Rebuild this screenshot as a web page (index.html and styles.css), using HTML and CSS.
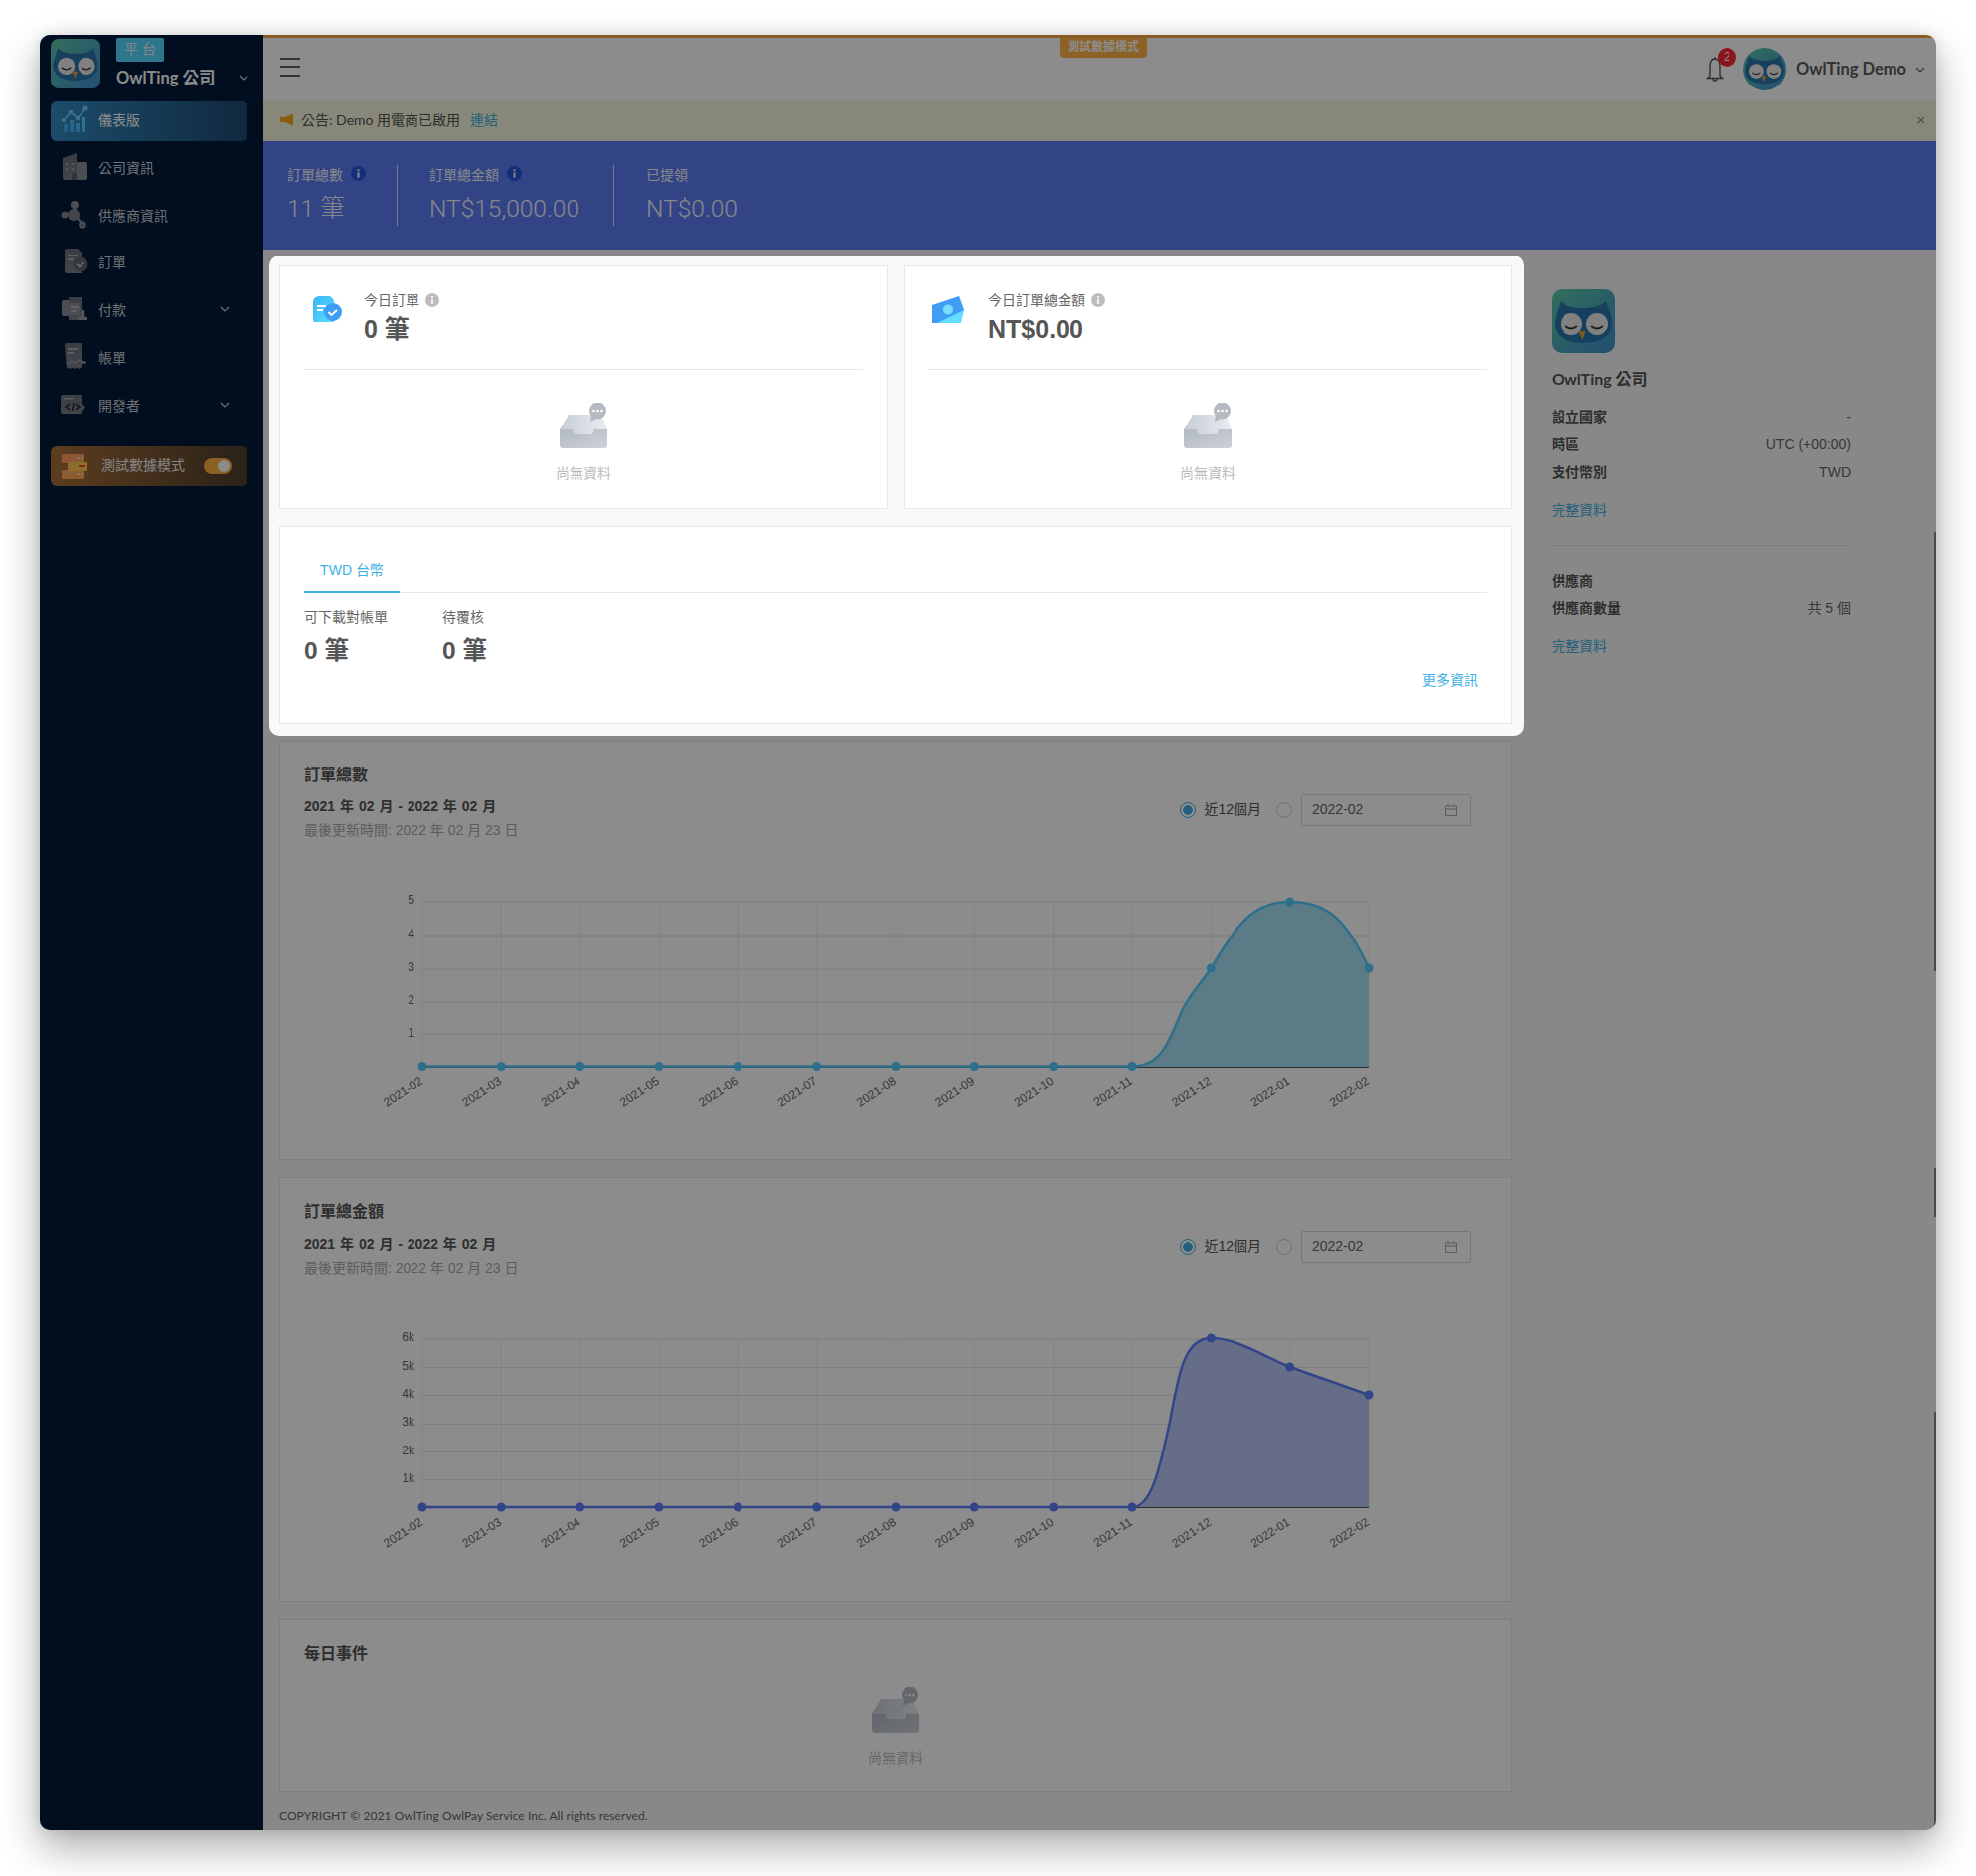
FILE: index.html
```html
<!DOCTYPE html>
<html lang="zh-Hant">
<head>
<meta charset="utf-8">
<title>OwlTing 儀表版</title>
<link rel="stylesheet" href="styles.css">
</head>
<body>
<svg class="sprite" width="0" height="0" aria-hidden="true">
  <defs>
    <linearGradient id="gOwl" x1="0" y1="0" x2="1" y2="1"><stop offset="0" stop-color="#5cc9a8"/><stop offset="1" stop-color="#3e8fd0"/></linearGradient>
    <linearGradient id="gDoc" x1="0" y1="0" x2="1" y2="1"><stop offset="0" stop-color="#35b6f4"/><stop offset="1" stop-color="#62dcff"/></linearGradient>
    <linearGradient id="gBars" x1="0" y1="1" x2="1" y2="0"><stop offset="0" stop-color="#3fa0ff"/><stop offset="1" stop-color="#5ce0ff"/></linearGradient>
    <linearGradient id="gGrey" x1="0" y1="0" x2="0" y2="1"><stop offset="0" stop-color="#6b7078"/><stop offset="1" stop-color="#7a7f87"/></linearGradient>
    <linearGradient id="gTray" x1="0" y1="0" x2="1" y2="0"><stop offset="0" stop-color="#c5ccd4"/><stop offset="1" stop-color="#e9edf2"/></linearGradient>
    <linearGradient id="gFront" x1="0" y1="0" x2="1" y2="1"><stop offset="0" stop-color="#b3b9c1"/><stop offset="1" stop-color="#ccd1d8"/></linearGradient>
    <symbol id="owl" viewBox="0 0 64 64">
      <rect width="64" height="64" rx="10" fill="url(#gOwl)"/>
      <path d="M9 12C14 17 22 19 32 19C42 19 50 17 55 12C59 22 61 29 61 35C61 48 47 54 32 54C17 54 3 48 3 35C3 29 6 22 9 12Z" fill="#2b76ad"/>
      <circle cx="20" cy="35" r="11" fill="#ececec"/>
      <circle cx="46" cy="35" r="11" fill="#ececec"/>
      <path d="M14 37q6 5 12 0M40 37q6 5 12 0" fill="none" stroke="#33383f" stroke-width="1.800"/>
      <path d="M27.500 42h7l-3 9z" fill="#eba130"/>
    </symbol>
    <symbol id="info" viewBox="0 0 14 14"><circle cx="7" cy="7" r="7" fill="currentColor"/><path class="info-mark" d="M6 6h2v5H6zM6 3h2v2H6z"/></symbol>
    <symbol id="chev" viewBox="0 0 10 6"><path d="M1 1l4 4 4-4" fill="none" stroke="currentColor" stroke-width="1.200"/></symbol>
    <symbol id="i-dash" viewBox="0 0 28 28">
      <path d="M3 27V19h4v8zM9 27V15h4v12zM15 27V18h4v9zM21 27V12h4v15z" fill="url(#gBars)"/>
      <path d="M3 15L10 7l7 6L25 3" fill="none" stroke="#6ad0ff" stroke-width="1.800"/>
      <circle cx="3" cy="15" r="2.200" fill="#6ad0ff"/><circle cx="10" cy="7" r="2.200" fill="#6ad0ff"/><circle cx="17" cy="13" r="2.200" fill="#6ad0ff"/><circle cx="25" cy="3" r="2.600" fill="#6ad0ff"/>
    </symbol>
    <symbol id="i-corp" viewBox="0 0 28 28">
      <path d="M2 5L16 0V27H4a2 2 0 0 1-2-2z" fill="url(#gGrey)"/><path d="M16 9h9a2 2 0 0 1 2 2V25a2 2 0 0 1-2 2H16z" fill="#888d95"/><path d="M11 20h5v7h-5z" fill="#5a5f66"/>
      <path d="M5 10h2v2H5zM11 10h2v2h-2zM5 15h2v2H5zM11 15h2v2h-2z" fill="#9aa0a8"/>
    </symbol>
    <symbol id="i-net" viewBox="0 0 28 28">
      <path d="M14 4V13M14 13L4 14M14 13L22 24" stroke="#80858d" stroke-width="2.500" fill="none"/>
      <circle cx="14" cy="4" r="4" fill="#8a8f97"/><circle cx="4" cy="14" r="3.500" fill="#80858d"/><circle cx="13" cy="14" r="6" fill="#7a7f87"/><circle cx="22" cy="24" r="3.800" fill="#8a8f97"/><circle cx="22" cy="24" r="1.600" fill="#5a5f66"/>
    </symbol>
    <symbol id="i-order" viewBox="0 0 28 28">
      <path d="M6 1H17L21 5V26H6a2 2 0 0 1-2-2V3a2 2 0 0 1 2-2z" fill="url(#gGrey)"/><path d="M7 7h10v2H7zM7 11h6v2H7z" fill="#a5aab2"/>
      <circle cx="20" cy="17" r="7.500" fill="#5f646c"/><path d="M16.500 17l2.500 2.500 4.500-4.500" fill="none" stroke="#d4d6da" stroke-width="1.500"/>
    </symbol>
    <symbol id="i-pay" viewBox="0 0 28 28">
      <path d="M3 5H12V21H3a2 2 0 0 1-2-2V7a2 2 0 0 1 2-2z" fill="#8a8f97"/><path d="M8 2H22V25H8z" fill="url(#gGrey)"/><path d="M8 8H19V20H8z" fill="#8a8f97"/><path d="M10 11h8v2h-8zM10 15h5v2h-5z" fill="#b0b4ba"/>
      <path d="M21 15h3l.5 7H27v3H17v-3h3.500z" fill="#9a9fa7"/>
    </symbol>
    <symbol id="i-bill" viewBox="0 0 28 28">
      <path d="M4 2a2 2 0 0 1 2-2H20a2 2 0 0 1 2 2V18h3v3h-3v5l-2-1.500-2 1.500-2-1.500-2 1.500-2-1.500-2 1.500-2-1.500-2 1.500z" fill="url(#gGrey)"/><path d="M7 5h10v2H7zM7 9h6v2H7z" fill="#a5aab2"/><path d="M6 21l5-3 3 2 5-3 7 3" fill="none" stroke="#9aa0a8" stroke-width="1.200"/>
    </symbol>
    <symbol id="i-dev" viewBox="0 0 28 28">
      <rect y="4" width="22" height="19" rx="2" fill="url(#gGrey)"/><path d="M3 7h9v1.500H3z" fill="#a5aab2"/>
      <path d="M9 13l-4 3 4 3M13 12l-1.500 8M15 13l4 3-4 3" fill="none" stroke="#2d3036" stroke-width="1.700"/><path d="M22 13l3 3.500-3 3.500z" fill="#80858d"/>
    </symbol>
    <symbol id="i-srv" viewBox="0 0 28 28">
      <rect x="1" y="2" width="23" height="9" rx="1" fill="#ffa060"/><rect x="1" y="18" width="23" height="9" rx="1" fill="#ffa858"/><rect x="7" y="10" width="20" height="9" rx="1" fill="#ffc84e"/>
      <path d="M16 5h3v2h-3zM20 5h3v2h-3zM16 21h3v2h-3zM20 21h3v2h-3z" fill="#f5d6b0"/><path d="M18 13h3v2h-3zM22 13h3v2h-3z" fill="#e5572c"/>
    </symbol>
    <symbol id="i-today" viewBox="0 0 29 26">
      <path d="M6 0H17L21 4V26H2a2 2 0 0 1-2-2V6a6 6 0 0 1 6-6z" fill="url(#gDoc)"/><path d="M4 9h9v2H4zM4 13h6v2H4z" fill="#fff"/>
      <circle cx="20" cy="16" r="9" fill="#3f9ef4"/><path d="M15.500 16l3 3 5.500-5" fill="none" stroke="#fff" stroke-width="1.800"/>
    </symbol>
    <symbol id="i-money" viewBox="0 0 32 27">
      <path d="M27 0L32 14L29 27H5Z" fill="#62dcff"/><path d="M0 9L27 0L32 14L5 27H0Z" fill="#3f9ef4"/><circle cx="16" cy="13.500" r="5" fill="#7adfff"/>
    </symbol>
    <symbol id="i-empty" viewBox="0 0 48 46">
      <path d="M0 27L9 12H42L48 27V34H0Z" fill="url(#gTray)"/>
      <path d="M0 27H13L15 32H33L35 27H48V43a3 3 0 0 1-3 3H3a3 3 0 0 1-3-3Z" fill="url(#gFront)"/>
      <circle cx="38.500" cy="8" r="8.500" fill="#b5bac1"/><path d="M32 12l-1 7 6-3z" fill="#b5bac1"/>
      <circle cx="34.500" cy="8" r="1.300" fill="#fff"/><circle cx="38.500" cy="8" r="1.300" fill="#fff"/><circle cx="42.500" cy="8" r="1.300" fill="#fff"/>
    </symbol>
  </defs>
</svg>

<div class="window">
  <aside class="sidebar">
    <div class="brand">
      <svg class="brand-logo"><use href="#owl"/></svg>
      <div class="brand-text">
        <span class="brand-tag">平 台</span>
        <span class="brand-name">OwlTing 公司</span>
      </div>
      <svg class="chev brand-chev"><use href="#chev"/></svg>
    </div>
    <nav class="menu">
      <a class="menu-item is-active"><svg class="menu-icon"><use href="#i-dash"/></svg><span>儀表版</span></a>
      <a class="menu-item"><svg class="menu-icon"><use href="#i-corp"/></svg><span>公司資訊</span></a>
      <a class="menu-item"><svg class="menu-icon"><use href="#i-net"/></svg><span>供應商資訊</span></a>
      <a class="menu-item"><svg class="menu-icon"><use href="#i-order"/></svg><span>訂單</span></a>
      <a class="menu-item"><svg class="menu-icon"><use href="#i-pay"/></svg><span>付款</span><svg class="chev menu-chev"><use href="#chev"/></svg></a>
      <a class="menu-item"><svg class="menu-icon"><use href="#i-bill"/></svg><span>帳單</span></a>
      <a class="menu-item"><svg class="menu-icon"><use href="#i-dev"/></svg><span>開發者</span><svg class="chev menu-chev"><use href="#chev"/></svg></a>
    </nav>
    <div class="testmode">
      <svg class="menu-icon"><use href="#i-srv"/></svg>
      <span class="testmode-label">測試數據模式</span>
      <span class="toggle"></span>
    </div>
  </aside>

  <div class="main">
    <header class="topbar">
      <div class="burger"><i></i><i></i><i></i></div>
      <span class="mode-flag">測試數據模式</span>
      <div class="account">
        <span class="bell">
          <svg viewBox="0 0 20 26" class="bell-icon"><path d="M10 2C6 2 5 6 5 10V19L2.500 21.500H17.500L15 19V10C15 6 14 2 10 2ZM8 22a2 2 0 0 0 4 0M10 2V0" fill="none" stroke="#555" stroke-width="1.400"/></svg>
          <b class="bell-badge">2</b>
        </span>
        <svg class="avatar"><use href="#owl"/></svg>
        <span class="account-name">OwlTing Demo</span>
        <svg class="chev account-chev"><use href="#chev"/></svg>
      </div>
    </header>

    <div class="notice">
      <svg class="notice-icon" viewBox="0 0 14 12"><path d="M0 3.500H5L13 0V12L5 8.500H0Z" fill="#f7a718"/></svg>
      <span>公告: Demo 用電商已啟用</span>
      <a class="notice-link">連結</a>
      <span class="notice-close">×</span>
    </div>

    <section class="band">
      <div class="band-stat">
        <div class="band-label">訂單總數 <svg class="info info-blue"><use href="#info"/></svg></div>
        <div class="band-value">11 筆</div>
      </div>
      <div class="band-stat band-stat-wide">
        <div class="band-label">訂單總金額 <svg class="info info-blue"><use href="#info"/></svg></div>
        <div class="band-value">NT$15,000.00</div>
      </div>
      <div class="band-stat band-stat-last">
        <div class="band-label">已提領</div>
        <div class="band-value">NT$0.00</div>
      </div>
    </section>

    <div class="content">
      <div class="col-main">
        <div class="spotlight">
          <div class="today-row">
            <article class="card today">
              <div class="today-head">
                <svg class="today-icon"><use href="#i-today"/></svg>
                <div>
                  <div class="today-title">今日訂單 <svg class="info"><use href="#info"/></svg></div>
                  <div class="today-value">0 筆</div>
                </div>
              </div>
              <div class="empty empty-today"><svg class="empty-icon"><use href="#i-empty"/></svg><span>尚無資料</span></div>
            </article>
            <article class="card today">
              <div class="today-head">
                <svg class="today-icon today-icon-money"><use href="#i-money"/></svg>
                <div>
                  <div class="today-title">今日訂單總金額 <svg class="info"><use href="#info"/></svg></div>
                  <div class="today-value">NT$0.00</div>
                </div>
              </div>
              <div class="empty empty-today"><svg class="empty-icon"><use href="#i-empty"/></svg><span>尚無資料</span></div>
            </article>
          </div>
          <article class="card bills">
            <div class="tabs"><span class="tab">TWD 台幣</span></div>
            <div class="bill-stats">
              <div class="bill-stat"><div class="bill-label">可下載對帳單</div><div class="bill-value">0 筆</div></div>
              <div class="bill-stat"><div class="bill-label">待覆核</div><div class="bill-value">0 筆</div></div>
            </div>
            <a class="more">更多資訊</a>
          </article>
        </div>

        <article class="card chart-card chart-card-a">
          <h3 class="card-title">訂單總數</h3>
          <div class="chart-head">
            <div>
              <div class="range">2021 年 02 月 - 2022 年 02 月</div>
              <div class="updated">最後更新時間: 2022 年 02 月 23 日</div>
            </div>
            <div class="controls">
              <span class="radio is-on"></span><span class="radio-label">近12個月</span>
              <span class="radio"></span>
              <span class="date-input">2022-02<svg class="cal" viewBox="0 0 12 12"><path d="M.5 2H11.500V11.500H.5ZM.5 5H11.500M3 0V2M9 0V2" fill="none" stroke="#aaa"/></svg></span>
            </div>
          </div>
          <svg class="chart" viewBox="282 860 1238 300">
            <path class="grid-v" d="M425 907V1073M504.300 907V1073M583.700 907V1073M663 907V1073M742.300 907V1073M821.700 907V1073M901 907V1073M980.300 907V1073M1059.700 907V1073M1139 907V1073M1218.300 907V1073M1297.700 907V1073M1377 907V1073"/>
            <path class="grid-h" d="M425 907H1377M425 941H1377M425 975H1377M425 1008H1377M425 1040H1377"/>
            <path class="fill-a" d="M1139 1073C1172 1073 1178 1040 1190 1015C1200 996 1208 990 1218.300 974C1245 930 1260 907 1297.700 907C1335 907 1355 925 1377 974V1073Z"/>
            <path class="axis" d="M425 1073.500H1377"/>
            <path class="line line-a" d="M425 1072.500H1139C1172 1072.500 1178 1040 1190 1015C1200 996 1208 990 1218.300 974C1245 930 1260 907 1297.700 907C1335 907 1355 925 1377 974"/>
            <g class="dots-a">
              <circle cx="425" cy="1072.500" r="4.500"/><circle cx="504.300" cy="1072.500" r="4.500"/><circle cx="583.700" cy="1072.500" r="4.500"/><circle cx="663" cy="1072.500" r="4.500"/><circle cx="742.300" cy="1072.500" r="4.500"/><circle cx="821.700" cy="1072.500" r="4.500"/><circle cx="901" cy="1072.500" r="4.500"/><circle cx="980.300" cy="1072.500" r="4.500"/><circle cx="1059.700" cy="1072.500" r="4.500"/><circle cx="1139" cy="1072.500" r="4.500"/><circle cx="1218.300" cy="974" r="4.500"/><circle cx="1297.700" cy="907" r="4.500"/><circle cx="1377" cy="974" r="4.500"/>
            </g>
            <g class="ylabels">
              <text x="417" y="909">5</text><text x="417" y="943">4</text><text x="417" y="977">3</text><text x="417" y="1010">2</text><text x="417" y="1043">1</text>
            </g>
            <g class="xlabels">
              <text transform="translate(427 1091) rotate(-33)">2021-02</text><text transform="translate(506.300 1091) rotate(-33)">2021-03</text><text transform="translate(585.700 1091) rotate(-33)">2021-04</text><text transform="translate(665 1091) rotate(-33)">2021-05</text><text transform="translate(744.300 1091) rotate(-33)">2021-06</text><text transform="translate(823.700 1091) rotate(-33)">2021-07</text><text transform="translate(903 1091) rotate(-33)">2021-08</text><text transform="translate(982.300 1091) rotate(-33)">2021-09</text><text transform="translate(1061.700 1091) rotate(-33)">2021-10</text><text transform="translate(1141 1091) rotate(-33)">2021-11</text><text transform="translate(1220.300 1091) rotate(-33)">2021-12</text><text transform="translate(1299.700 1091) rotate(-33)">2022-01</text><text transform="translate(1379 1091) rotate(-33)">2022-02</text>
            </g>
          </svg>
        </article>

        <article class="card chart-card chart-card-b">
          <h3 class="card-title">訂單總金額</h3>
          <div class="chart-head">
            <div>
              <div class="range">2021 年 02 月 - 2022 年 02 月</div>
              <div class="updated">最後更新時間: 2022 年 02 月 23 日</div>
            </div>
            <div class="controls">
              <span class="radio is-on"></span><span class="radio-label">近12個月</span>
              <span class="radio"></span>
              <span class="date-input">2022-02<svg class="cal" viewBox="0 0 12 12"><path d="M.5 2H11.500V11.500H.5ZM.5 5H11.500M3 0V2M9 0V2" fill="none" stroke="#aaa"/></svg></span>
            </div>
          </div>
          <svg class="chart" viewBox="282 1299 1238 300">
            <path class="grid-v" d="M425 1347V1517M504.300 1347V1517M583.700 1347V1517M663 1347V1517M742.300 1347V1517M821.700 1347V1517M901 1347V1517M980.300 1347V1517M1059.700 1347V1517M1139 1347V1517M1218.300 1347V1517M1297.700 1347V1517M1377 1347V1517"/>
            <path class="grid-h" d="M425 1347H1377M425 1375.500H1377M425 1403.500H1377M425 1432.500H1377M425 1460.500H1377M425 1488.500H1377"/>
            <path class="fill-b" d="M1139 1516C1160 1516 1168 1470 1177 1430C1186 1380 1192 1346 1218.300 1346C1245 1346 1270 1364 1297.700 1375L1377 1403V1516Z"/>
            <path class="axis" d="M425 1516.500H1377"/>
            <path class="line line-b" d="M425 1516H1139C1160 1516 1168 1470 1177 1430C1186 1380 1192 1346 1218.300 1346C1245 1346 1270 1364 1297.700 1375L1377 1403"/>
            <g class="dots-b">
              <circle cx="425" cy="1516" r="4.500"/><circle cx="504.300" cy="1516" r="4.500"/><circle cx="583.700" cy="1516" r="4.500"/><circle cx="663" cy="1516" r="4.500"/><circle cx="742.300" cy="1516" r="4.500"/><circle cx="821.700" cy="1516" r="4.500"/><circle cx="901" cy="1516" r="4.500"/><circle cx="980.300" cy="1516" r="4.500"/><circle cx="1059.700" cy="1516" r="4.500"/><circle cx="1139" cy="1516" r="4.500"/><circle cx="1218.300" cy="1346" r="4.500"/><circle cx="1297.700" cy="1375" r="4.500"/><circle cx="1377" cy="1403" r="4.500"/>
            </g>
            <g class="ylabels">
              <text x="417" y="1349">6k</text><text x="417" y="1378">5k</text><text x="417" y="1406">4k</text><text x="417" y="1434">3k</text><text x="417" y="1463">2k</text><text x="417" y="1491">1k</text>
            </g>
            <g class="xlabels">
              <text transform="translate(427 1535) rotate(-33)">2021-02</text><text transform="translate(506.300 1535) rotate(-33)">2021-03</text><text transform="translate(585.700 1535) rotate(-33)">2021-04</text><text transform="translate(665 1535) rotate(-33)">2021-05</text><text transform="translate(744.300 1535) rotate(-33)">2021-06</text><text transform="translate(823.700 1535) rotate(-33)">2021-07</text><text transform="translate(903 1535) rotate(-33)">2021-08</text><text transform="translate(982.300 1535) rotate(-33)">2021-09</text><text transform="translate(1061.700 1535) rotate(-33)">2021-10</text><text transform="translate(1141 1535) rotate(-33)">2021-11</text><text transform="translate(1220.300 1535) rotate(-33)">2021-12</text><text transform="translate(1299.700 1535) rotate(-33)">2022-01</text><text transform="translate(1379 1535) rotate(-33)">2022-02</text>
            </g>
          </svg>
        </article>

        <article class="card events">
          <h3 class="card-title">每日事件</h3>
          <div class="empty empty-events"><svg class="empty-icon"><use href="#i-empty"/></svg><span>尚無資料</span></div>
        </article>

        <footer class="copyright">COPYRIGHT © 2021 OwlTing OwlPay Service Inc. All rights reserved.</footer>
      </div>

      <aside class="col-side">
        <svg class="side-logo"><use href="#owl"/></svg>
        <div class="side-title">OwlTing 公司</div>
        <dl class="side-list">
          <div class="side-row"><dt>設立國家</dt><dd>-</dd></div>
          <div class="side-row"><dt>時區</dt><dd>UTC (+00:00)</dd></div>
          <div class="side-row"><dt>支付幣別</dt><dd>TWD</dd></div>
        </dl>
        <a class="side-link">完整資料</a>
        <hr class="side-rule">
        <dl class="side-list side-list-b">
          <div class="side-row"><dt>供應商</dt><dd></dd></div>
          <div class="side-row"><dt>供應商數量</dt><dd>共 5 個</dd></div>
        </dl>
        <a class="side-link">完整資料</a>
      </aside>
    </div>
  </div>

  <span class="thumb thumb-a"></span>
  <span class="thumb thumb-b"></span>
  <span class="thumb thumb-c"></span>
</div>
</body>
</html>
```

FILE: styles.css
```css
* { box-sizing: border-box; }

html, body { margin: 0; background: #fff; }

body {
  padding: 35px 40px 46px;
  font-family: "Liberation Sans", "Noto Sans CJK TC", sans-serif;
  font-size: 14px;
  color: #666;
}

.sprite { position: absolute; }

.window {
  position: relative;
  display: flex;
  width: 1908px;
  height: 1806px;
  border-radius: 10px;
  overflow: hidden;
  box-shadow: 0 18px 40px rgba(0, 0, 0, .32), 0 0 14px rgba(0, 0, 0, .12);
}

/* sidebar */
.sidebar {
  flex: none;
  width: 225px;
  padding: 3px 16px 0 11px;
  background: #021b3a;
  color: #c9ccd2;
}

.brand { display: flex; align-items: flex-start; }
.brand-logo { flex: none; width: 50px; height: 50px; margin-top: 1px; }
.brand-text { display: flex; flex-direction: column; align-items: flex-start; margin-left: 16px; }
.brand-tag {
  width: 48px;
  height: 24px;
  border-radius: 2px;
  background: #52d8ff;
  color: #f2f2f2;
  font-size: 14px;
  line-height: 22px;
  text-align: center;
}
.brand-name {
  margin-top: 4px;
  color: #fff;
  font-family: "Lato", "Noto Sans CJK TC", sans-serif;
  font-size: 16.5px;
  font-weight: 700;
  line-height: 24px;
  white-space: nowrap;
}
.chev { width: 10px; height: 6px; color: #c9ccd2; }
.brand-chev { margin: 37px -1px 0 auto; }

.menu { margin-top: 12px; }
.menu-item {
  display: flex;
  align-items: center;
  height: 40px;
  margin-bottom: 7.8px;
  padding: 0 0 4px 10px;
  border-radius: 6px;
  font-size: 14px;
}
.menu-item.is-active {
  background: linear-gradient(90deg, #338cc3, #1d4b73);
  color: #fff;
}
.menu-icon { flex: none; width: 28px; height: 28px; margin-right: 10px; }
.menu-chev { margin-left: auto; margin-right: 18px; }

.testmode {
  display: flex;
  align-items: center;
  height: 40px;
  margin-top: 20px;
  padding-left: 10px;
  border-radius: 6px;
  background: linear-gradient(90deg, #a87038, #4d3d2d);
}
.testmode .menu-icon { margin-right: 13px; }
.testmode-label { margin-bottom: 3px; color: #f0f0f0; }
.toggle {
  position: relative;
  width: 28px;
  height: 16px;
  margin-left: auto;
  margin-right: 16px;
  border-radius: 8px;
  background: #ffb03f;
}
.toggle::after {
  content: "";
  position: absolute;
  top: 2px;
  right: 2px;
  width: 12px;
  height: 12px;
  border-radius: 50%;
  background: #fff;
}

/* main */
.main {
  display: flex;
  flex: 1;
  flex-direction: column;
  min-width: 0;
  border-top: 3px solid #fba73e;
  background: #f8f8f8;
}

.topbar {
  position: relative;
  display: flex;
  flex: none;
  align-items: center;
  height: 63px;
  padding: 0 11px 0 17px;
  background: #fff;
}
.burger { display: flex; flex-direction: column; gap: 6.5px; width: 20px; margin-bottom: 5px; }
.burger i { display: block; height: 2px; background: #5c5c5c; }
.mode-flag {
  position: absolute;
  top: 0;
  left: 801px;
  width: 88px;
  height: 20px;
  border-radius: 0 0 4px 4px;
  background: #ffb245;
  color: #fff;
  font-size: 12px;
  font-weight: 700;
  line-height: 18px;
  text-align: center;
  white-space: nowrap;
}
.account { display: flex; align-items: center; margin-left: auto; }
.bell { position: relative; display: block; width: 20px; height: 26px; margin-right: 19px; }
.bell-icon { display: block; width: 20px; height: 26px; }
.bell-badge {
  position: absolute;
  top: -9px;
  left: 13px;
  width: 19px;
  height: 19px;
  border-radius: 50%;
  background: #ff2630;
  color: #fff;
  font-size: 12px;
  font-weight: 400;
  line-height: 19px;
  text-align: center;
}
.avatar { width: 43px; height: 43px; border-radius: 50%; }
.account-name {
  margin-left: 10px;
  padding-bottom: 2px;
  color: #5a5a5a;
  font-family: "Lato", sans-serif;
  font-size: 16.5px;
  font-weight: 700;
}
.account-chev { margin-left: 9px; color: #666; }

.notice {
  display: flex;
  flex: none;
  align-items: center;
  height: 41px;
  padding: 0 0 3px 17px;
  background: #f8f8de;
  color: #555;
  font-family: "Lato", "Noto Sans CJK TC", sans-serif;
  font-size: 14px;
}
.notice-icon { width: 14px; height: 13px; margin-right: 7px; }
.notice-link { margin-left: 10px; color: #3fb1e5; }
.notice-close { margin-left: auto; margin-right: 11px; color: #888; font-family: "Liberation Sans", sans-serif; font-size: 15px; }

.band {
  display: flex;
  flex: none;
  align-items: flex-start;
  height: 109px;
  padding: 24px 0 0 24px;
  background: #5b7df5;
  color: #f4f6fc;
}
.band-stat { padding-right: 31px; margin-right: 32px; border-right: 1px solid #dfe5fb; }
.band-stat-wide { padding-right: 34px; }
.band-stat-last { border-right: 0; }
.band-label { display: flex; align-items: center; gap: 6px; height: 19px; padding-bottom: 2px; font-size: 14px; }
.band-value { height: 42px; font-family: "Roboto", "Noto Sans CJK TC", sans-serif; font-size: 24.5px; font-weight: 300; line-height: 49px; white-space: nowrap; }

.info { width: 14px; height: 14px; margin-left: 2px; color: #bdbdbd; vertical-align: -2px; }
.info-mark { fill: #f2f2f2; }
.info-blue { width: 15px; height: 15px; color: #2456e0; }
.info-blue .info-mark { fill: #6f8df0; }

.content {
  display: grid;
  flex: 1;
  grid-template-columns: 1240px 301px;
  column-gap: 40px;
  align-items: start;
  padding: 16px 16px 0;
}

.card { border: 1px solid #e8e8e8; background: #fff; }
.col-main { display: flex; flex-direction: column; gap: 17px; }

.spotlight {
  position: relative;
  z-index: 2;
  display: flex;
  flex-direction: column;
  gap: 17px;
  margin: -10px -12px -12px -10px;
  padding: 10px 12px 12px 10px;
  border-radius: 10px;
  background: #f9f9f9;
  box-shadow: 0 0 0 3000px rgba(0, 0, 0, .45);
}

.today-row { display: grid; grid-template-columns: 1fr 1fr; gap: 16px; }
.today { height: 245px; padding: 0 24px; }
.today-head {
  display: flex;
  align-items: flex-start;
  padding: 24px 0 25px;
  border-bottom: 1px solid #e8e8e8;
}
.today-icon { flex: none; width: 29px; height: 26px; margin: 6px 22px 0 9px; }
.today-icon-money { width: 32px; height: 27px; margin: 6px 24px 0 4px; }
.today-title { height: 20px; color: #666; font-size: 14px; line-height: 20px; }
.today-value { height: 31px; margin-top: 3px; color: #555; font-size: 25px; font-weight: 700; line-height: 32px; }

.empty { display: flex; flex-direction: column; align-items: center; color: #bbb; font-size: 14px; line-height: 20px; }
.empty-icon { width: 48px; height: 46px; margin-bottom: 15px; }
.empty-today { padding-top: 33px; }
.empty-events { padding-top: 21px; color: #bbb; }

.bills { height: 199px; padding: 22px 24px 0; }
.tabs { height: 44px; border-bottom: 1px solid #e8e8e8; }
.tab {
  display: block;
  width: 96px;
  height: 44px;
  border-bottom: 2px solid #3fb1e5;
  color: #3fb1e5;
  font-size: 14px;
  line-height: 43px;
  text-align: center;
}
.bill-stats { display: flex; margin-top: 10px; }
.bill-stat { height: 66px; padding: 5px 0 0 30px; }
.bill-stat:first-child { width: 109px; padding-left: 0; border-right: 1px solid #e8e8e8; }
.bill-label { color: #666; font-size: 14px; line-height: 20px; }
.bill-value { margin-top: 5px; color: #555; font-size: 24.5px; font-weight: 700; line-height: 38px; }
.more { display: block; margin: 3px 9px 0 0; color: #3fb1e5; font-size: 14px; line-height: 18px; text-align: right; }

.chart-card { padding: 22px 24px 0; }
.chart-card-a { height: 422px; }
.chart-card-b { height: 427px; }
.card-title { margin: 0; color: #555; font-size: 16px; font-weight: 700; line-height: 24px; }
.chart-head { display: flex; align-items: flex-start; justify-content: space-between; height: 47px; margin-top: 7px; }
.range { margin-top: 2px; color: #555; font-size: 14px; font-weight: 700; line-height: 20px; word-spacing: 1px; }
.chart-card-b .range { margin-top: 3px; }
.updated { margin-top: 4px; color: #aaa; font-size: 14px; line-height: 20px; }

.controls { display: flex; align-items: center; height: 32px; margin-right: 16px; }
.radio {
  width: 16px;
  height: 16px;
  margin-right: 9px;
  border: 1px solid #ccc;
  border-radius: 50%;
  background: #fff;
}
.radio.is-on { margin-right: 8px; border-color: #3fb1e5; background: radial-gradient(circle, #3fb1e5 0 4.500px, #fff 5px); }
.radio-label { margin-right: 15px; padding-bottom: 5px; color: #555; font-size: 14px; }
.date-input {
  display: flex;
  align-items: center;
  justify-content: space-between;
  width: 171px;
  height: 32px;
  padding: 0 13px 3px 10px;
  border: 1px solid #d9d9d9;
  border-radius: 2px;
  background: #fff;
  color: #666;
  font-size: 14px;
}
.cal { width: 12px; height: 12px; margin-top: 3px; }

.chart { display: block; width: 1238px; height: 300px; margin: 14px -24px 0; }
.grid-v { fill: none; stroke: #f0f0f0; stroke-width: 1; }
.grid-h { fill: none; stroke: #e4e4e4; stroke-width: 1; }
.axis { fill: none; stroke: #555; stroke-width: 1; }
.line { fill: none; stroke-width: 2.500; }
.line-a { stroke: #54caff; }
.line-b { stroke: #5b7ff8; }
.fill-a { fill: #a7e0f5; }
.fill-b { fill: #bac6f8; }
.dots-a { fill: #54caff; }
.dots-b { fill: #5b7ff8; }
.ylabels, .xlabels { fill: #666; font-family: "Liberation Sans", sans-serif; font-size: 12px; }
.ylabels { text-anchor: end; }
.xlabels { text-anchor: end; transform: translate(-1px, -2px); }

.events { height: 175px; padding: 23px 24px 0; }
.copyright {
  margin-top: -3px;
  color: #666;
  font-family: "Lato", sans-serif;
  font-size: 12px;
  letter-spacing: .07px;
  line-height: 20px;
}

/* right column */
.col-side { padding-top: 24px; }
.side-logo { display: block; width: 64px; height: 64px; }
.side-title {
  margin-top: 14px;
  color: #555;
  font-family: "Lato", "Noto Sans CJK TC", sans-serif;
  font-size: 16px;
  font-weight: 700;
  line-height: 24px;
}
.side-list { margin: 12px 0 0; }
.side-list-b { margin-top: 21px; }
.side-row { display: flex; justify-content: space-between; height: 28px; font-size: 14px; line-height: 28px; }
.side-row dt { color: #555; font-weight: 700; }
.side-row dd { margin: 0; color: #666; }
.side-link { display: block; margin-top: 14px; color: #3fb1e5; font-size: 14px; line-height: 20px; }
.side-rule { height: 1px; margin: 25px 0 0; border: 0; background: #e4e4e4; }

.thumb { position: absolute; right: 0; z-index: 3; width: 2px; background: #4a4a4a; }
.thumb-a { top: 500px; height: 442px; }
.thumb-b { top: 1140px; height: 49px; }
.thumb-c { top: 1385px; bottom: 0; }
```
